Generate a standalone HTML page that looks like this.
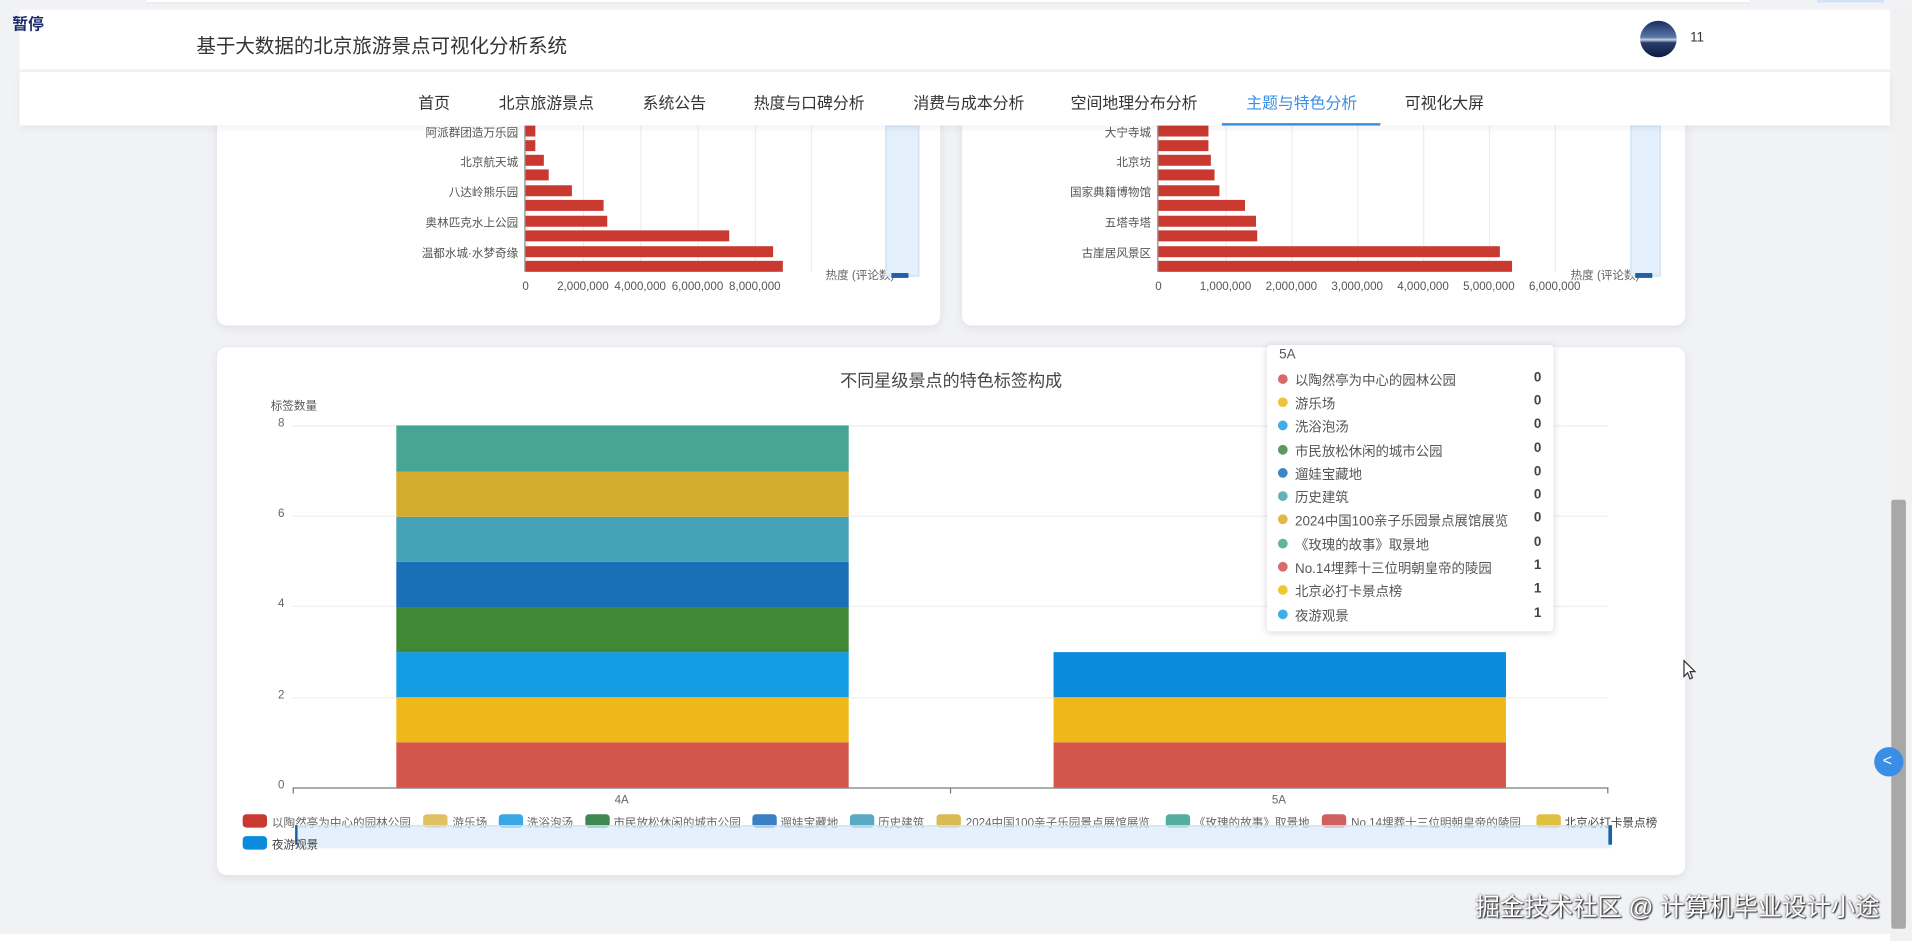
<!DOCTYPE html>
<html><head><meta charset="utf-8">
<style>
*{margin:0;padding:0;box-sizing:border-box}
body{width:1912px;height:941px;overflow:hidden;background:#f0f2f5;font-family:"Liberation Sans","Noto Sans CJK SC",sans-serif}
#w{position:absolute;left:0;top:0;width:1568px;height:772px;transform:scale(1.2194,1.2189);transform-origin:0 0;background:#f0f2f5;overflow:hidden}
.a{position:absolute}
.t{position:absolute;white-space:nowrap}
.card{position:absolute;background:#fff;border-radius:8px;box-shadow:0 2px 8px rgba(0,0,0,.08)}
.bar{position:absolute;background:#c9392f;height:9px}
.lab{position:absolute;font-size:9.5px;color:#555;text-align:right;white-space:nowrap}
.xl{position:absolute;font-size:9.5px;color:#555;white-space:nowrap;transform:translateX(-50%)}
.g{position:absolute;width:1px;background:#eee}
.seg{position:absolute;width:371px}
.sw{position:absolute;width:20px;height:11px;border-radius:3px}
.lt{position:absolute;font-size:9.5px;color:#666;white-space:nowrap}
.tr{position:absolute;left:0;width:235px;height:19px;font-size:11px;color:#555}
.tr i{position:absolute;left:9px;top:5px;width:8px;height:8px;border-radius:50%}
.tr span{position:absolute;left:23px;top:2px;white-space:nowrap}
.tr b{position:absolute;right:10px;top:2px;color:#444}
#hd{position:absolute;left:0;top:0;width:1568px;height:104px;z-index:5}
</style></head><body><div id="w">
<!-- card 1/2 -->
<div class="card" style="left:178px;top:80px;width:593px;height:187px"></div>
<div class="card" style="left:789px;top:80px;width:593px;height:187px"></div>
<div class="a" style="left:0;top:103px;width:1568px;height:170px">
<div class="g" style="left:478px;top:0;height:120px"></div><div class="g" style="left:525px;top:0;height:120px"></div><div class="g" style="left:572px;top:0;height:120px"></div><div class="g" style="left:619px;top:0;height:120px"></div><div class="g" style="left:665px;top:0;height:120px"></div>
<div class="a" style="left:430px;top:0;width:1px;height:120px;background:#888"></div>
<div class="bar" style="left:431px;top:0;width:8px"></div>
<div class="bar" style="left:431px;top:12px;width:8px"></div>
<div class="bar" style="left:431px;top:24px;width:15px"></div>
<div class="bar" style="left:431px;top:36px;width:19px"></div>
<div class="bar" style="left:431px;top:49px;width:38px"></div>
<div class="bar" style="left:431px;top:61px;width:64px"></div>
<div class="bar" style="left:431px;top:74px;width:67px"></div>
<div class="bar" style="left:431px;top:86px;width:167px"></div>
<div class="bar" style="left:431px;top:99px;width:203px"></div>
<div class="bar" style="left:431px;top:111px;width:211px"></div>
<div class="lab" style="right:1143px;top:-2px">阿派群团造万乐园</div>
<div class="lab" style="right:1143px;top:22px">北京航天城</div>
<div class="lab" style="right:1143px;top:47px">八达岭熊乐园</div>
<div class="lab" style="right:1143px;top:72px">奥林匹克水上公园</div>
<div class="lab" style="right:1143px;top:97px">温都水城·水梦奇缘</div>
<div class="xl" style="left:431px;top:127px">0</div>
<div class="xl" style="left:478px;top:127px">2,000,000</div>
<div class="xl" style="left:525px;top:127px">4,000,000</div>
<div class="xl" style="left:572px;top:127px">6,000,000</div>
<div class="xl" style="left:619px;top:127px">8,000,000</div>
<div class="t" style="left:677px;top:115px;font-size:9.5px;color:#666">热度 (评论数)</div>
<div class="a" style="left:726px;top:0;width:28px;height:124px;background:#e3effb;border:1px solid #cfe0f3"></div>
<div class="a" style="left:731px;top:121px;width:14px;height:4px;background:#1e5fa8"></div>
<div class="g" style="left:1005px;top:0;height:120px"></div><div class="g" style="left:1059px;top:0;height:120px"></div><div class="g" style="left:1113px;top:0;height:120px"></div><div class="g" style="left:1167px;top:0;height:120px"></div><div class="g" style="left:1221px;top:0;height:120px"></div><div class="g" style="left:1275px;top:0;height:120px"></div>
<div class="a" style="left:949px;top:0;width:1px;height:120px;background:#888"></div>
<div class="bar" style="left:950px;top:0;width:41px"></div>
<div class="bar" style="left:950px;top:12px;width:41px"></div>
<div class="bar" style="left:950px;top:24px;width:43px"></div>
<div class="bar" style="left:950px;top:36px;width:46px"></div>
<div class="bar" style="left:950px;top:49px;width:50px"></div>
<div class="bar" style="left:950px;top:61px;width:71px"></div>
<div class="bar" style="left:950px;top:74px;width:80px"></div>
<div class="bar" style="left:950px;top:86px;width:81px"></div>
<div class="bar" style="left:950px;top:99px;width:280px"></div>
<div class="bar" style="left:950px;top:111px;width:290px"></div>
<div class="lab" style="right:624px;top:-2px">大宁寺城</div>
<div class="lab" style="right:624px;top:22px">北京坊</div>
<div class="lab" style="right:624px;top:47px">国家典籍博物馆</div>
<div class="lab" style="right:624px;top:72px">五塔寺塔</div>
<div class="lab" style="right:624px;top:97px">古崖居风景区</div>
<div class="xl" style="left:950px;top:127px">0</div>
<div class="xl" style="left:1005px;top:127px">1,000,000</div>
<div class="xl" style="left:1059px;top:127px">2,000,000</div>
<div class="xl" style="left:1113px;top:127px">3,000,000</div>
<div class="xl" style="left:1167px;top:127px">4,000,000</div>
<div class="xl" style="left:1221px;top:127px">5,000,000</div>
<div class="xl" style="left:1275px;top:127px">6,000,000</div>
<div class="t" style="left:1288px;top:115px;font-size:9.5px;color:#666">热度 (评论数)</div>
<div class="a" style="left:1337px;top:0;width:25px;height:124px;background:#e3effb;border:1px solid #cfe0f3"></div>
<div class="a" style="left:1341px;top:121px;width:14px;height:4px;background:#1e5fa8"></div>
</div>

<!-- header -->
<div id="hd">
<div class="a" style="left:0;top:0;width:1568px;height:8px;background:#f0f2f5"></div>
<div class="a" style="left:120px;top:0;width:1315px;height:3px;background:#fff;border-bottom:1px solid #e4e4e4"></div>
<div class="a" style="left:1490px;top:0;width:55px;height:2px;background:#cfe2f7"></div>
<div class="a" style="left:16px;top:8px;width:1534px;height:50px;background:#fff;border-bottom:1px solid #eee"></div>
<div class="t" style="left:10px;top:9px;font-size:13px;color:#1d2b6b;font-weight:bold">暂停</div>
<div class="t" style="left:161px;top:24px;font-size:16px;color:#333">基于大数据的北京旅游景点可视化分析系统</div>
<div class="a" style="left:1345px;top:17px;width:30px;height:30px;border-radius:50%;background:linear-gradient(#1a2c5c,#5876a8 45%,#c6d0e0 52%,#2a3d6a 60%,#0d1a40)"></div>
<div class="t" style="left:1386px;top:25px;font-size:11px;color:#333">11</div>
<div class="a" style="left:16px;top:59px;width:1534px;height:44px;background:#fff;box-shadow:0 2px 6px rgba(0,0,0,.06)"></div>
<div class="t" style="left:343px;top:74px;font-size:13px;color:#333">首页</div>
<div class="t" style="left:409px;top:74px;font-size:13px;color:#333">北京旅游景点</div>
<div class="t" style="left:527px;top:74px;font-size:13px;color:#333">系统公告</div>
<div class="t" style="left:618px;top:74px;font-size:13px;color:#333">热度与口碑分析</div>
<div class="t" style="left:749px;top:74px;font-size:13px;color:#333">消费与成本分析</div>
<div class="t" style="left:878px;top:74px;font-size:13px;color:#333">空间地理分布分析</div>
<div class="t" style="left:1022px;top:74px;font-size:13px;color:#3a8ee6">主题与特色分析</div>
<div class="t" style="left:1152px;top:74px;font-size:13px;color:#333">可视化大屏</div>
<div class="a" style="left:1002px;top:101px;width:130px;height:2px;background:#3a8ee6"></div>
</div>

<!-- card 3 -->
<div class="card" style="left:178px;top:285px;width:1204px;height:433px"></div>
<div class="t" style="left:780px;top:302px;font-size:14px;color:#464646;transform:translateX(-50%)">不同星级景点的特色标签构成</div>
<div class="t" style="left:222px;top:325px;font-size:9.5px;color:#555">标签数量</div>
<div class="a" style="left:240px;top:349px;width:1079px;height:1px;background:#eee"></div>
<div class="a" style="left:240px;top:423px;width:1079px;height:1px;background:#eee"></div>
<div class="a" style="left:240px;top:497px;width:1079px;height:1px;background:#eee"></div>
<div class="a" style="left:240px;top:572px;width:1079px;height:1px;background:#eee"></div>
<div class="a" style="left:240px;top:646px;width:1079px;height:1px;background:#777"></div>
<div class="a" style="left:240px;top:646px;width:1px;height:5px;background:#777"></div>
<div class="a" style="left:779px;top:646px;width:1px;height:5px;background:#777"></div>
<div class="a" style="left:1318px;top:646px;width:1px;height:5px;background:#777"></div>
<div class="t" style="left:228px;top:342px;font-size:9.5px;color:#666">8</div>
<div class="t" style="left:228px;top:416px;font-size:9.5px;color:#666">6</div>
<div class="t" style="left:228px;top:490px;font-size:9.5px;color:#666">4</div>
<div class="t" style="left:228px;top:565px;font-size:9.5px;color:#666">2</div>
<div class="t" style="left:228px;top:639px;font-size:9.5px;color:#666">0</div>
<div class="seg" style="left:325px;top:609px;height:37px;background:#d4554c"></div>
<div class="seg" style="left:325px;top:572px;height:37px;background:#eeb81b"></div>
<div class="seg" style="left:325px;top:535px;height:37px;background:#139ce2"></div>
<div class="seg" style="left:325px;top:498px;height:37px;background:#3f8936"></div>
<div class="seg" style="left:325px;top:461px;height:37px;background:#1b6fb8"></div>
<div class="seg" style="left:325px;top:424px;height:37px;background:#46a2b6"></div>
<div class="seg" style="left:325px;top:387px;height:37px;background:#d5ad2e"></div>
<div class="seg" style="left:325px;top:349px;height:38px;background:#46a693"></div>
<div class="seg" style="left:864px;top:609px;height:37px;background:#d4554c"></div>
<div class="seg" style="left:864px;top:572px;height:37px;background:#eeb81b"></div>
<div class="seg" style="left:864px;top:535px;height:37px;background:#0a8bdc"></div>
<div class="t" style="left:504px;top:651px;font-size:9.5px;color:#666">4A</div>
<div class="t" style="left:1043px;top:651px;font-size:9.5px;color:#666">5A</div>
<div class="sw" style="left:199px;top:668px;background:#c9392f"></div><div class="lt" style="left:223px;top:667px">以陶然亭为中心的园林公园</div>
<div class="sw" style="left:347px;top:668px;background:#e0c060"></div><div class="lt" style="left:371px;top:667px">游乐场</div>
<div class="sw" style="left:409px;top:668px;background:#3aa8e6"></div><div class="lt" style="left:432px;top:667px">洗浴泡汤</div>
<div class="sw" style="left:480px;top:668px;background:#3f8950"></div><div class="lt" style="left:503px;top:667px">市民放松休闲的城市公园</div>
<div class="sw" style="left:617px;top:668px;background:#3a7fc4"></div><div class="lt" style="left:640px;top:667px">遛娃宝藏地</div>
<div class="sw" style="left:697px;top:668px;background:#5aaac4"></div><div class="lt" style="left:720px;top:667px">历史建筑</div>
<div class="sw" style="left:768px;top:668px;background:#d9bb55"></div><div class="lt" style="left:792px;top:667px">2024中国100亲子乐园景点展馆展览</div>
<div class="sw" style="left:956px;top:668px;background:#55ada0"></div><div class="lt" style="left:979px;top:667px">《玫瑰的故事》取景地</div>
<div class="sw" style="left:1084px;top:668px;background:#d06060"></div><div class="lt" style="left:1108px;top:667px">No.14埋葬十三位明朝皇帝的陵园</div>
<div class="sw" style="left:1260px;top:668px;background:#e0c040"></div><div class="lt" style="left:1283px;top:667px;color:#444">北京必打卡景点榜</div>
<div class="a" style="left:242px;top:677px;width:1079px;height:19px;background:rgba(210,230,250,.6);border-top:1px solid #cfe0f3"></div>
<div class="a" style="left:242px;top:677px;width:2px;height:16px;background:#1e5fa8"></div>
<div class="a" style="left:1319px;top:677px;width:3px;height:16px;background:#1e5fa8"></div>
<div class="sw" style="left:199px;top:686px;background:#0a8bdc"></div><div class="lt" style="left:223px;top:685px;color:#444">夜游观景</div>
<div class="a" style="left:1039px;top:283px;width:235px;height:235px;background:#fff;box-shadow:0 1px 6px rgba(0,0,0,.15);border-radius:3px">
<div class="t" style="left:10px;top:2px;font-size:11px;color:#555">5A</div>
<div class="tr" style="top:19px"><i style="background:#d96a6a"></i><span>以陶然亭为中心的园林公园</span><b>0</b></div>
<div class="tr" style="top:38px"><i style="background:#eec23c"></i><span>游乐场</span><b>0</b></div>
<div class="tr" style="top:57px"><i style="background:#3eaee8"></i><span>洗浴泡汤</span><b>0</b></div>
<div class="tr" style="top:77px"><i style="background:#5f9760"></i><span>市民放松休闲的城市公园</span><b>0</b></div>
<div class="tr" style="top:96px"><i style="background:#3f84c4"></i><span>遛娃宝藏地</span><b>0</b></div>
<div class="tr" style="top:115px"><i style="background:#64b1b8"></i><span>历史建筑</span><b>0</b></div>
<div class="tr" style="top:134px"><i style="background:#e0b94a"></i><span>2024中国100亲子乐园景点展馆展览</span><b>0</b></div>
<div class="tr" style="top:154px"><i style="background:#62b59a"></i><span>《玫瑰的故事》取景地</span><b>0</b></div>
<div class="tr" style="top:173px"><i style="background:#dd6a6a"></i><span>No.14埋葬十三位明朝皇帝的陵园</span><b>1</b></div>
<div class="tr" style="top:192px"><i style="background:#eec82f"></i><span>北京必打卡景点榜</span><b>1</b></div>
<div class="tr" style="top:212px"><i style="background:#3eaee8"></i><span>夜游观景</span><b>1</b></div>
</div>
<svg class="a" style="left:1380px;top:541px" width="12" height="18" viewBox="0 0 12 18"><path d="M1 1 L1 14 L4 11 L6 16 L8 15 L6 10 L10 10 Z" fill="#fff" stroke="#333" stroke-width="1"/></svg>
<div class="t" style="left:1210px;top:728px;font-size:20px;color:#fff;text-shadow:0 0 2px #333,1px 1px 1px #333">掘金技术社区 @ 计算机毕业设计小途</div>
<div class="a" style="left:1550px;top:0;width:18px;height:772px;background:#f1f1f1"></div>
<div class="a" style="left:1551px;top:410px;width:12px;height:352px;background:#a8a8a8;border-radius:2px"></div>
<div class="a" style="left:1537px;top:613px;width:24px;height:24px;border-radius:12px;background:#3a8ee6;z-index:6"></div>
<div class="t" style="left:1544px;top:616px;font-size:13px;color:#fff;z-index:7">&lt;</div>
<div class="a" style="left:0;top:766px;width:1550px;height:6px;background:#fff"></div>
</div></body></html>
